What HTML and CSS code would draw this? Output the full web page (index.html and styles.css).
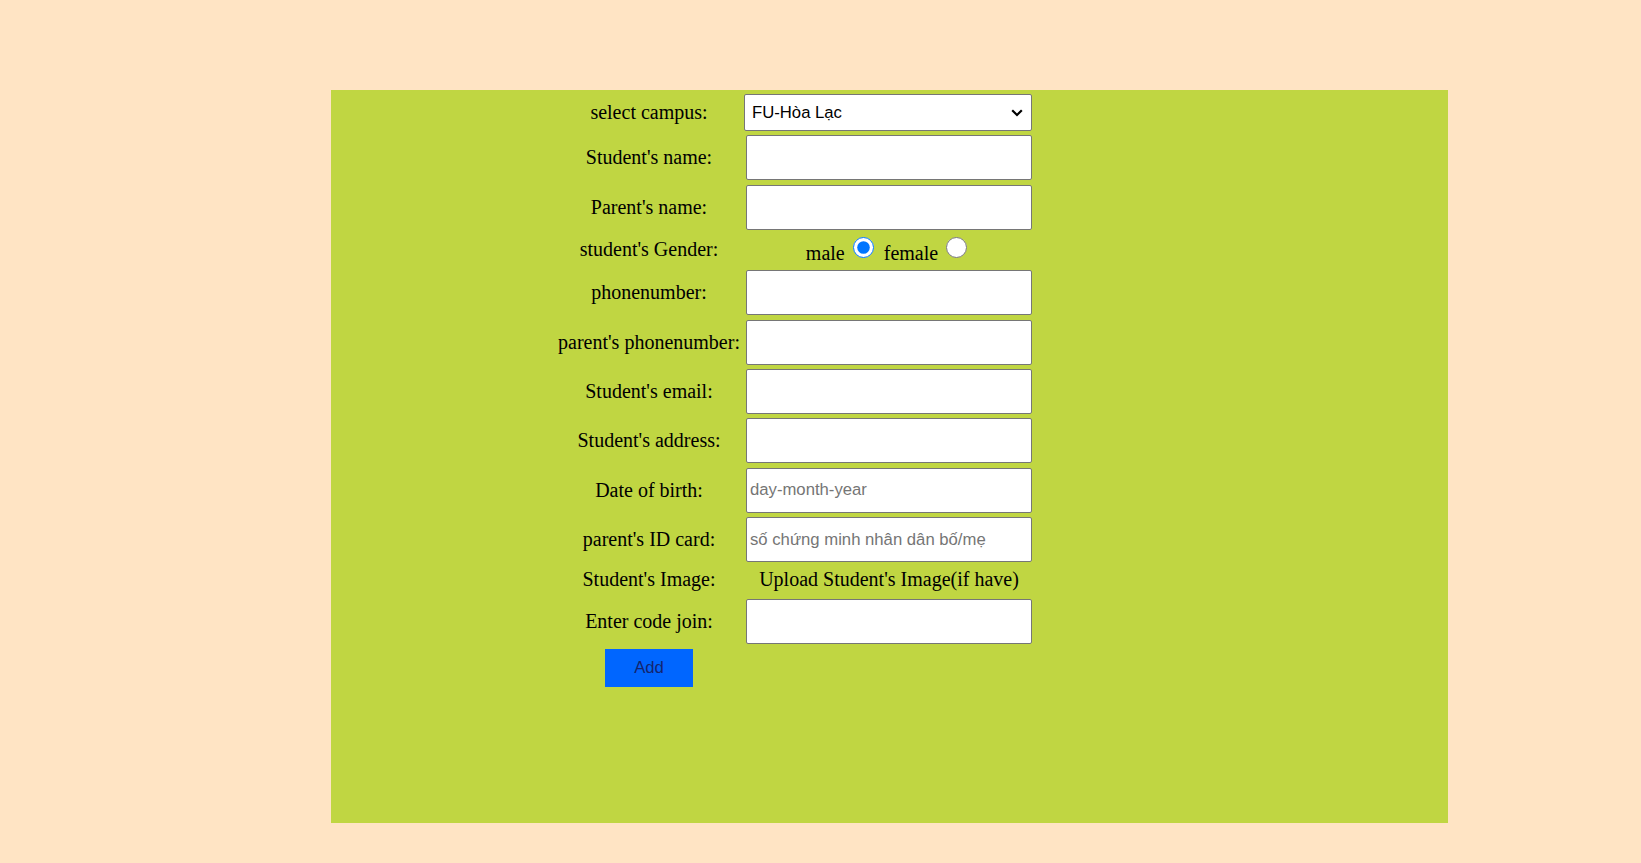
FILE: index.html
```html
<!DOCTYPE html>
<html>
<head>
<meta charset="utf-8">
<link rel="stylesheet" href="styles.css">
</head>
<body>
<div class="panel">
  <form class="form">
    <label class="lbl">select campus:</label>
    <div class="cell"><select class="sel"><option>FU-Hòa Lạc</option></select></div>

    <label class="lbl">Student's name:</label>
    <div class="cell"><input class="inp" type="text"></div>

    <label class="lbl">Parent's name:</label>
    <div class="cell"><input class="inp" type="text"></div>

    <label class="lbl gender-lbl">student's Gender:</label>
    <div class="cell gender">male<input class="radio" type="radio" name="g" checked> female<input class="radio" type="radio" name="g"></div>

    <label class="lbl">phonenumber:</label>
    <div class="cell"><input class="inp" type="text"></div>

    <label class="lbl">parent's phonenumber:</label>
    <div class="cell"><input class="inp" type="text"></div>

    <label class="lbl">Student's email:</label>
    <div class="cell"><input class="inp" type="text"></div>

    <label class="lbl">Student's address:</label>
    <div class="cell"><input class="inp" type="text"></div>

    <label class="lbl">Date of birth:</label>
    <div class="cell"><input class="inp" type="text" placeholder="day-month-year"></div>

    <label class="lbl">parent's ID card:</label>
    <div class="cell"><input class="inp" type="text" placeholder="số chứng minh nhân dân bố/mẹ"></div>

    <label class="lbl img-row">Student's Image:</label>
    <div class="cell img-row">Upload Student's Image(if have)</div>

    <label class="lbl">Enter code join:</label>
    <div class="cell"><input class="inp" type="text"></div>

    <div class="lbl"><button class="btn" type="button">Add</button></div>
    <div class="cell"></div>
  </form>
</div>
</body>
</html>
```

FILE: styles.css
```css
html, body {
  margin: 0;
  padding: 0;
  background: #ffe4c4;
}
body {
  font-family: "Liberation Serif", "Times New Roman", serif;
  font-size: 20px;
  color: #000;
  padding-top: 90px;
  padding-left: 331px;
}
.panel {
  width: 1117px;
  height: 733px;
  background: #c0d642;
  padding-top: 4px;
  box-sizing: border-box;
}
.form {
  margin: 0 0 0 225px;
  display: grid;
  grid-template-columns: 186px 290px;
  column-gap: 2px;
  row-gap: 4.4px;
  align-items: center;
}
.lbl {
  text-align: center;
  line-height: 23px;
}
.cell {
  text-align: center;
  line-height: 23px;
}
.sel {
  display: block;
  box-sizing: border-box;
  width: 288px;
  height: 37px;
  margin: 0;
  font-family: "Liberation Sans", Arial, sans-serif;
  font-size: 16.7px;
  color: #000;
  border: 1px solid #767676;
  border-radius: 2px;
  padding: 0 24px 0 7px;
  -webkit-appearance: none;
  appearance: none;
  background: #fff url("data:image/svg+xml,%3Csvg xmlns='http://www.w3.org/2000/svg' width='12' height='8' viewBox='0 0 12 8'%3E%3Cpath d='M1.2 1.2 L6 6 L10.8 1.2' fill='none' stroke='%23000' stroke-width='2.2'/%3E%3C/svg%3E") no-repeat right 8px center;
  background-size: 12px 8px;
}
.inp {
  display: block;
  box-sizing: border-box;
  width: 286px;
  height: 45px;
  margin: 0 0 0 2px;
  font-family: "Liberation Sans", Arial, sans-serif;
  font-size: 16.7px;
  border: 1px solid #767676;
  border-radius: 2px;
  background: #fff;
  padding: 1px 3px;
}
.inp::placeholder {
  color: #757575;
}
.gender {
  padding: 3px 0 0.6px;
}
.radio {
  width: 21px;
  height: 21px;
  margin: 0 5px 0 8px;
  vertical-align: 2px;
}
.img-row {
  min-height: 28px;
  line-height: 25px;
  padding-bottom: 3px;
  box-sizing: border-box;
}
.btn {
  width: 88px;
  height: 38px;
  background: #0066ff;
  border: none;
  color: #14246e;
  font-family: "Liberation Sans", Arial, sans-serif;
  font-size: 16.7px;
  display: block;
  margin: 1px auto 0 49px;
  padding: 0;
}
```
